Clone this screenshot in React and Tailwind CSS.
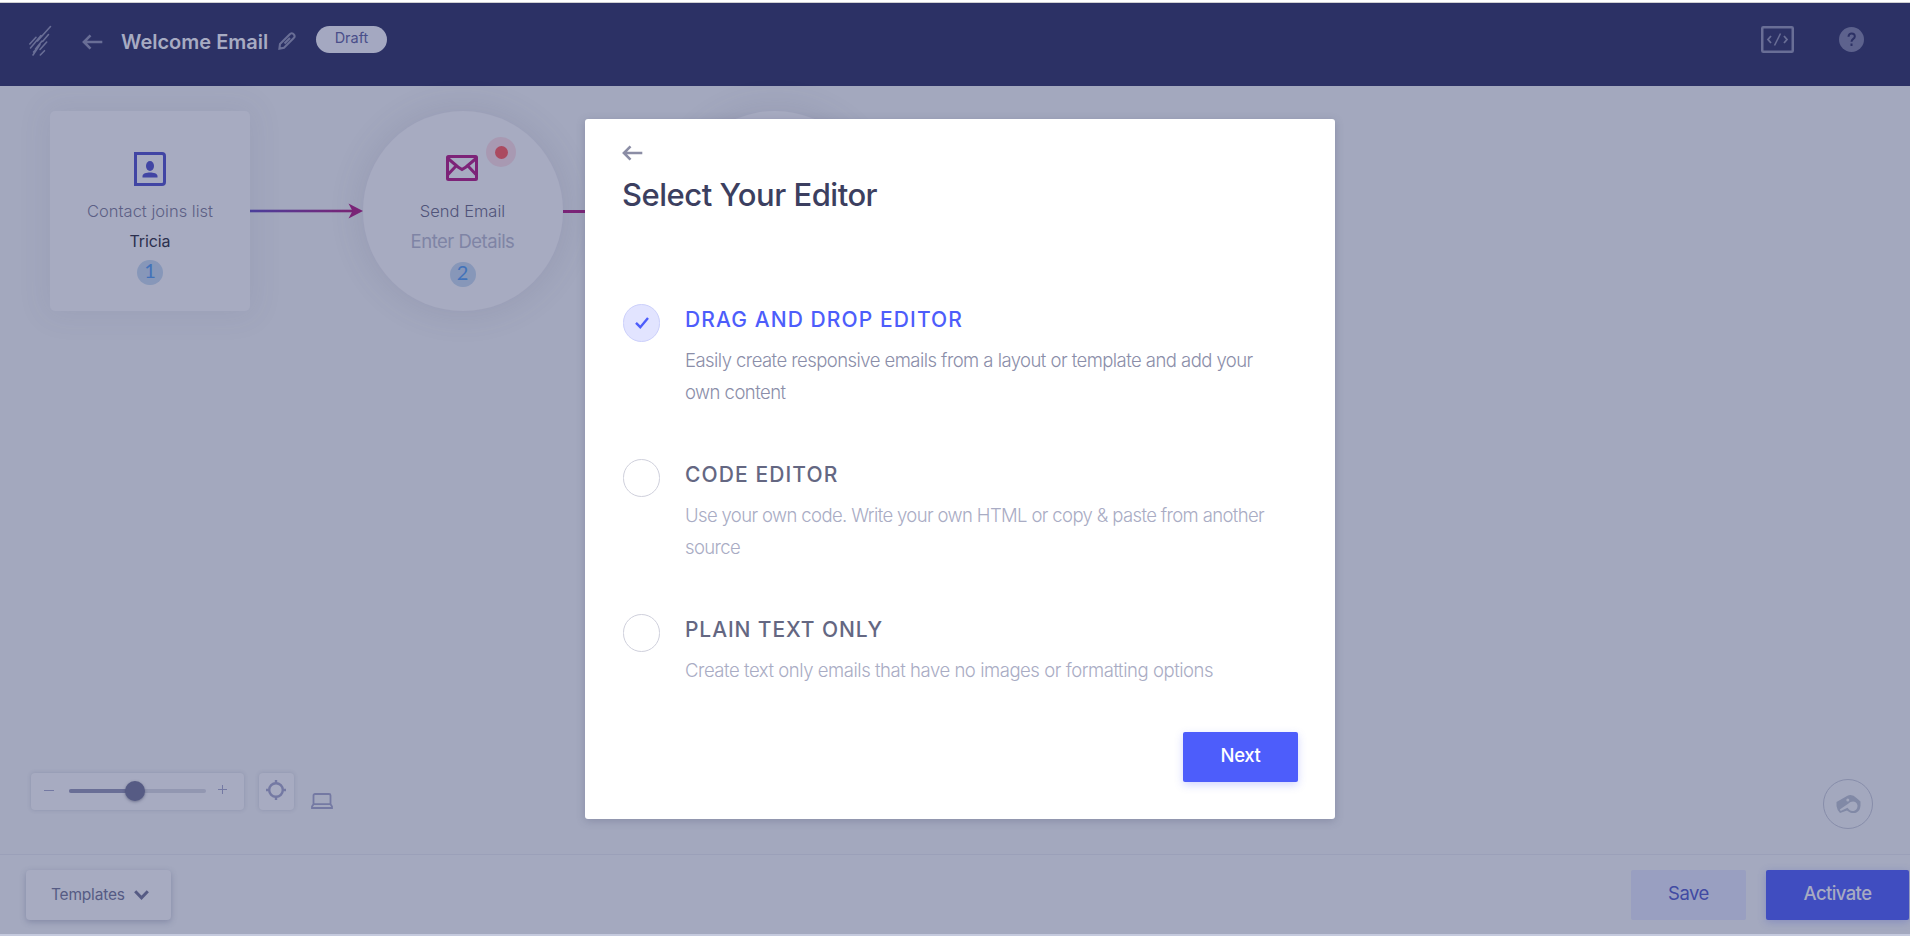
import React, { useState } from "react";

const editors = [
  {
    id: "drag",
    title: "DRAG AND DROP EDITOR",
    lines: ["Easily create responsive emails from a layout or template and add your", "own content"],
    titleTracking: "tracking-[1.1px]",
    tracking: "tracking-[-0.55px]",
  },
  {
    id: "code",
    title: "CODE EDITOR",
    lines: ["Use your own code. Write your own HTML or copy & paste from another", "source"],
    titleTracking: "tracking-[1.1px]",
    tracking: "tracking-[-0.63px]",
  },
  {
    id: "plain",
    title: "PLAIN TEXT ONLY",
    lines: ["Create text only emails that have no images or formatting options"],
    titleTracking: "tracking-[0.9px]",
    tracking: "tracking-[-0.45px]",
  },
];

const BackArrow = ({ className }) => (
  <svg className={className} width="21" height="16" viewBox="0 0 21 16" fill="none" stroke="currentColor" strokeWidth="2.6">
    <path d="M8.500 1.300 1.900 8l6.600 6.700M1.900 8H20.300" />
  </svg>
);

const Logo = () => (
  <svg width="24" height="32" viewBox="0 0 24 32" fill="none" stroke="currentColor" strokeWidth="1.6" strokeLinecap="round">
    <path d="M22.500 1.500 9.500 16M8 12.300 1.800 19M20.500 9.500 14.800 16.300M13 10.500 2.500 23M18.700 17 12 24.500M14 16 7.500 24M12 19.500 5 30M16.500 25.700 12.300 30M10 22.500 5.500 27" />
  </svg>
);

const Header = () => (
  <header className="flex h-[83px] items-start bg-[#2c3165] pl-[28px] pr-[46px] text-[#696e96]">
    <div className="mt-[22px]">
      <Logo />
    </div>
    <BackArrow className="ml-[30px] mt-[31px]" />
    <h1 className="ml-[18px] mt-[24px] w-[157px] whitespace-nowrap text-[20px] font-semibold leading-[30px] text-[#a7abc2]">
      Welcome Email
    </h1>
    <svg className="mt-[29px]" width="18" height="18" viewBox="0 0 18 18" fill="none" stroke="currentColor" strokeWidth="2.1">
      <path d="M1.400 16.600 2 12 11.800 2.300a2.300 2.300 0 0 1 3.900 0 2.300 2.300 0 0 1 0 3.700L6 15.800ZM6.500 11.500 12 6" />
    </svg>
    <span className="ml-[20px] mt-[23px] h-[27px] w-[71px] rounded-full bg-[#a4a8c1] text-center text-[14.500px] leading-[24px] text-[#4a4e8a]">
      Draft
    </span>
    <div className="ml-auto mt-[23px] flex items-center">
      <svg width="33" height="27" viewBox="0 0 33 27" fill="none" stroke="currentColor">
        <rect x="1.250" y="1.250" width="30.500" height="24.500" rx="1" strokeWidth="2.500" />
        <path d="M10 10 7 13.500l3 3.500M23 10l3 3.500-3 3.500" strokeWidth="1.800" />
        <path d="M19.500 7.500 13.500 19.500" strokeWidth="1.500" />
      </svg>
      <svg className="ml-[45px]" width="25" height="25" viewBox="0 0 25 25" fill="none">
        <circle cx="12.500" cy="12.500" r="12.500" fill="#5d628d" />
        <path d="M9.500 9.800c0-4.600 6.300-4.200 6.300-.4 0 2.500-3.300 2.500-3.300 5.400M12.500 16.500v2.400" stroke="#2c3165" strokeWidth="2" />
      </svg>
    </div>
  </header>
);

const StepBadge = ({ children }) => (
  <span className="flex h-[25px] w-[26px] justify-center rounded-full bg-[#8797b9] font-['Lato',sans-serif] text-[20px] leading-[20px] text-[#4272b9]">
    {children}
  </span>
);

const ContactNode = () => (
  <div className="flex size-[200px] flex-col items-center rounded-[5px] bg-[#a7abc1] pt-[41px] shadow-[0_0_30px_6px_rgba(70,75,110,0.07)]">
    <svg width="32" height="34" viewBox="0 0 32 34" fill="none">
      <path d="M1.500 1.500H28a2.500 2.500 0 0 1 2.500 2.500V30a2.500 2.500 0 0 1-2.500 2.500H1.500Z" stroke="#4145a4" strokeWidth="3" />
      <ellipse cx="16" cy="14" rx="4" ry="5" fill="#4145a4" />
      <path d="M8.500 25.500V24c0-2.500 4-3.500 7.500-3.500s7.500 1 7.500 3.500v1.500Z" fill="#4145a4" />
    </svg>
    <p className="mt-[13px] whitespace-nowrap text-[16.500px] font-light leading-[24px] text-[#5c5f85]">Contact joins list</p>
    <p className="mt-[6px] text-[16px] leading-[24px] tracking-[-0.1px] text-[#2c304e]">Tricia</p>
    <div className="mt-[7px]">
      <StepBadge>1</StepBadge>
    </div>
  </div>
);

const EmailNode = () => (
  <div className="relative flex size-[200px] flex-col items-center rounded-full bg-[#a7abc1] pt-[44px] shadow-[0_0_30px_6px_rgba(70,75,110,0.11)]">
    <svg className="mr-[2px]" width="32" height="26" viewBox="0 0 32 26" fill="none" stroke="#7d2378" strokeWidth="3">
      <rect x="1.500" y="1.500" width="29" height="23" rx="1" />
      <path d="M2 3.500 12 12l4 2.500 4-2.500L30 3.500M2 19.500 10.500 10.500M30 19.500 21.500 10.500" />
    </svg>
    <span className="absolute left-[123px] top-[26px] flex size-[30px] items-center justify-center rounded-full bg-[#a899b2]">
      <span className="size-[13px] rounded-full bg-[#ab4a60]" />
    </span>
    <p className="mt-[18px] mr-px whitespace-nowrap text-[16.500px] font-light leading-[24px] text-[#505379]">Send Email</p>
    <p className="mt-[6px] mr-px whitespace-nowrap text-[18.500px] leading-[24px] tracking-[-0.5px] text-[#7f84a5]">Enter Details</p>
    <div className="mr-px mt-[9px]">
      <StepBadge>2</StepBadge>
    </div>
  </div>
);

const Canvas = () => (
  <main className="flex h-[768px] flex-col justify-between bg-[#a3a8be]">
    <div className="flex items-center pl-[50px] pt-[25px]">
      <ContactNode />
      <svg width="113" height="18" viewBox="0 0 113 18">
        <defs>
          <linearGradient id="join" x1="0" x2="1" y1="0" y2="0">
            <stop offset="0" stopColor="#4b3f9b" />
            <stop offset="1" stopColor="#7b2475" />
          </linearGradient>
        </defs>
        <rect x="0" y="7.700" width="104" height="2.600" fill="url(#join)" />
        <path d="M98.500 1.500 113 9 98.500 16.500 102.500 9Z" fill="#7d2378" />
      </svg>
      <EmailNode />
      <div className="h-[3px] w-[112px] bg-[#7d2378]" />
      <div className="size-[200px] rounded-full bg-[#a7abc1] shadow-[0_0_30px_6px_rgba(70,75,110,0.11)]" />
    </div>
    <div className="flex items-start pb-[25px] pl-[31px] pr-[37px] text-[#7479a3]">
      <div className="-mt-[6px] flex h-[37px] w-[213px] items-center rounded-[4px] bg-[#a7abc1] px-[13px] shadow-[0_0_4px_rgba(60,65,110,0.200)]">
        <span className="-mt-[2px] h-px w-[10px] bg-[#7479a3]" />
        <div className="relative -mt-px ml-[15px] flex h-[4px] w-[137px] rounded-full bg-[#9297b1]">
          <div className="h-full w-[66px] rounded-full bg-[#696e96]" />
          <span className="absolute left-[56px] top-[-8px] size-[20px] rounded-full bg-[#565b84] shadow-[0_1px_3px_rgba(50,55,90,0.500)]" />
        </div>
        <svg className="-mt-[4px] ml-[12px]" width="9" height="9" viewBox="0 0 9 9" stroke="currentColor">
          <path d="M4.500 0V9M0 4.500H9" />
        </svg>
      </div>
      <div className="-mt-[6px] ml-[15px] flex h-[37px] w-[35px] rounded-[4px] bg-[#a7abc1] pl-[7px] pt-[7px] shadow-[0_0_4px_rgba(60,65,110,0.200)]">
        <svg width="20" height="20" viewBox="0 0 20 20" fill="none" stroke="currentColor" strokeWidth="2.400">
          <circle cx="10" cy="10" r="6.800" />
          <path d="M10 0V4M10 16V20M0 10H4M16 10H20" />
        </svg>
      </div>
      <svg className="ml-[17px] mt-[14px]" width="22" height="16" viewBox="0 0 22 16" fill="none" stroke="currentColor" strokeWidth="1.800">
        <path d="M2.500 11V2.500A1.500 1.500 0 0 1 4 1H18a1.500 1.500 0 0 1 1.500 1.500V11M2.500 11.200H19.500L21 13.500V15H1V13.500Z" />
      </svg>
      <div className="ml-auto flex size-[50px] items-center justify-center rounded-full border border-[#878daa]">
        <svg width="25" height="19" viewBox="0 0 25 19">
          <path
            d="M.5 7 11 1Q16-1.500 20.500 3L24.500 6.500V10.500C24 19.500 15.500 19.500 11 15.500L4 18Q1 15 .5 11ZM3.800 14.500 4.700 16 11.500 12.800 13.500 15C17 17.800 21.800 15 21.500 10.500 21 5.500 15 5.500 12.500 8.500Z"
            fill="#8189a6"
            fillRule="evenodd"
          />
          <circle cx="11.800" cy="5" r="1.500" fill="#a3a8be" />
        </svg>
      </div>
    </div>
  </main>
);

const Footer = () => (
  <footer className="flex h-[80px] items-start border-t border-[#9ba0b9] bg-[#a4a9bf] pl-[26px] pr-px pt-[15px]">
    <button className="flex h-[50px] w-[145px] items-center rounded-[4px] bg-[#a7abc1] pl-[25px] text-[15.500px] tracking-[-0.2px] text-[#565b84] shadow-[0_2px_6px_rgba(60,65,110,0.300)]">
      <span className="w-[83px] text-left">Templates</span>
      <svg width="15" height="10" viewBox="0 0 15 10" fill="none" stroke="currentColor" strokeWidth="3">
        <path d="m1.200 1.200 6.300 6.600 6.300-6.600" />
      </svg>
    </button>
    <button className="ml-auto h-[50px] w-[115px] rounded-[2px] bg-[#999fc1] pb-[3px] text-[18.500px] tracking-[-0.5px] text-[#414aa3]">Save</button>
    <button className="ml-[20px] h-[50px] w-[143px] rounded-[2px] bg-[#404dc0] pb-[3px] text-[18.500px] font-medium tracking-[-0.6px] text-[#a7abc2] shadow-[0_2px_8px_rgba(64,77,192,0.300)]">
      Activate
    </button>
  </footer>
);

const EditorOption = ({ editor, selected, onSelect }) => (
  <button type="button" onClick={onSelect} className="flex h-[155px] items-start text-left">
    <span
      className={
        selected
          ? "flex h-[38px] w-[37px] items-center justify-center rounded-full border border-[#ccd0fb] bg-[#e2e4ff]"
          : "h-[38px] w-[37px] rounded-full border border-[#cfd0dc]"
      }
    >
      {selected && (
        <svg width="14" height="12" viewBox="0 0 14 12" fill="none" stroke="#4d5dfb" strokeWidth="2.400">
          <path d="M1 5.800 5.300 10.200 13 1" />
        </svg>
      )}
    </span>
    <span className="ml-[25px] flex flex-col whitespace-nowrap">
      <span
        className={
          (selected
            ? "text-[21px] font-medium leading-[32px] text-[#4d5dfb] "
            : "text-[21px] font-medium leading-[32px] text-[#646782] ") + editor.titleTracking
        }
      >
        {editor.title}
      </span>
      <span
        className={
          (selected
            ? "mt-[8px] text-[18.500px] font-light leading-[32px] text-[#8b8ea9] "
            : "mt-[8px] text-[18.500px] font-light leading-[32px] text-[#a9acc4] ") + editor.tracking
        }
      >
        {editor.lines.map((line) => (
          <span key={line} className="block">
            {line}
          </span>
        ))}
      </span>
    </span>
  </button>
);

const EditorModal = () => {
  const [selected, setSelected] = useState("drag");

  return (
    <div className="absolute left-[585px] top-[117px] flex h-[700px] w-[750px] flex-col rounded-[3px] bg-white px-[37px] pt-[26px] shadow-[0_2px_8px_rgba(60,65,100,0.250)]">
      <BackArrow className="text-[#8b8da5]" />
      <h2 className="mt-[12px] text-[31px] font-medium leading-[44px] tracking-[-0.5px] text-[#3c3f60]">Select Your Editor</h2>
      <div className="ml-px mt-[87px] flex flex-col">
        {editors.map((editor) => (
          <EditorOption key={editor.id} editor={editor} selected={selected === editor.id} onSelect={() => setSelected(editor.id)} />
        ))}
      </div>
      <button className="-mt-[37px] h-[50px] w-[115px] self-end rounded-[2px] bg-[#4d5dfb] pb-[3px] text-[18.500px] font-medium tracking-[-0.4px] text-white shadow-[0_3px_8px_rgba(77,93,251,0.250)]">
        Next
      </button>
    </div>
  );
};

const App = () => {
  return (
    <div className="relative h-[936px] w-full overflow-hidden border-t-2 border-white bg-[#c5cade] font-['Inter',sans-serif]">
      <div className="h-px bg-[#cfcfd2]" />
      <Header />
      <Canvas />
      <Footer />
      <EditorModal />
    </div>
  );
};

export default App;
